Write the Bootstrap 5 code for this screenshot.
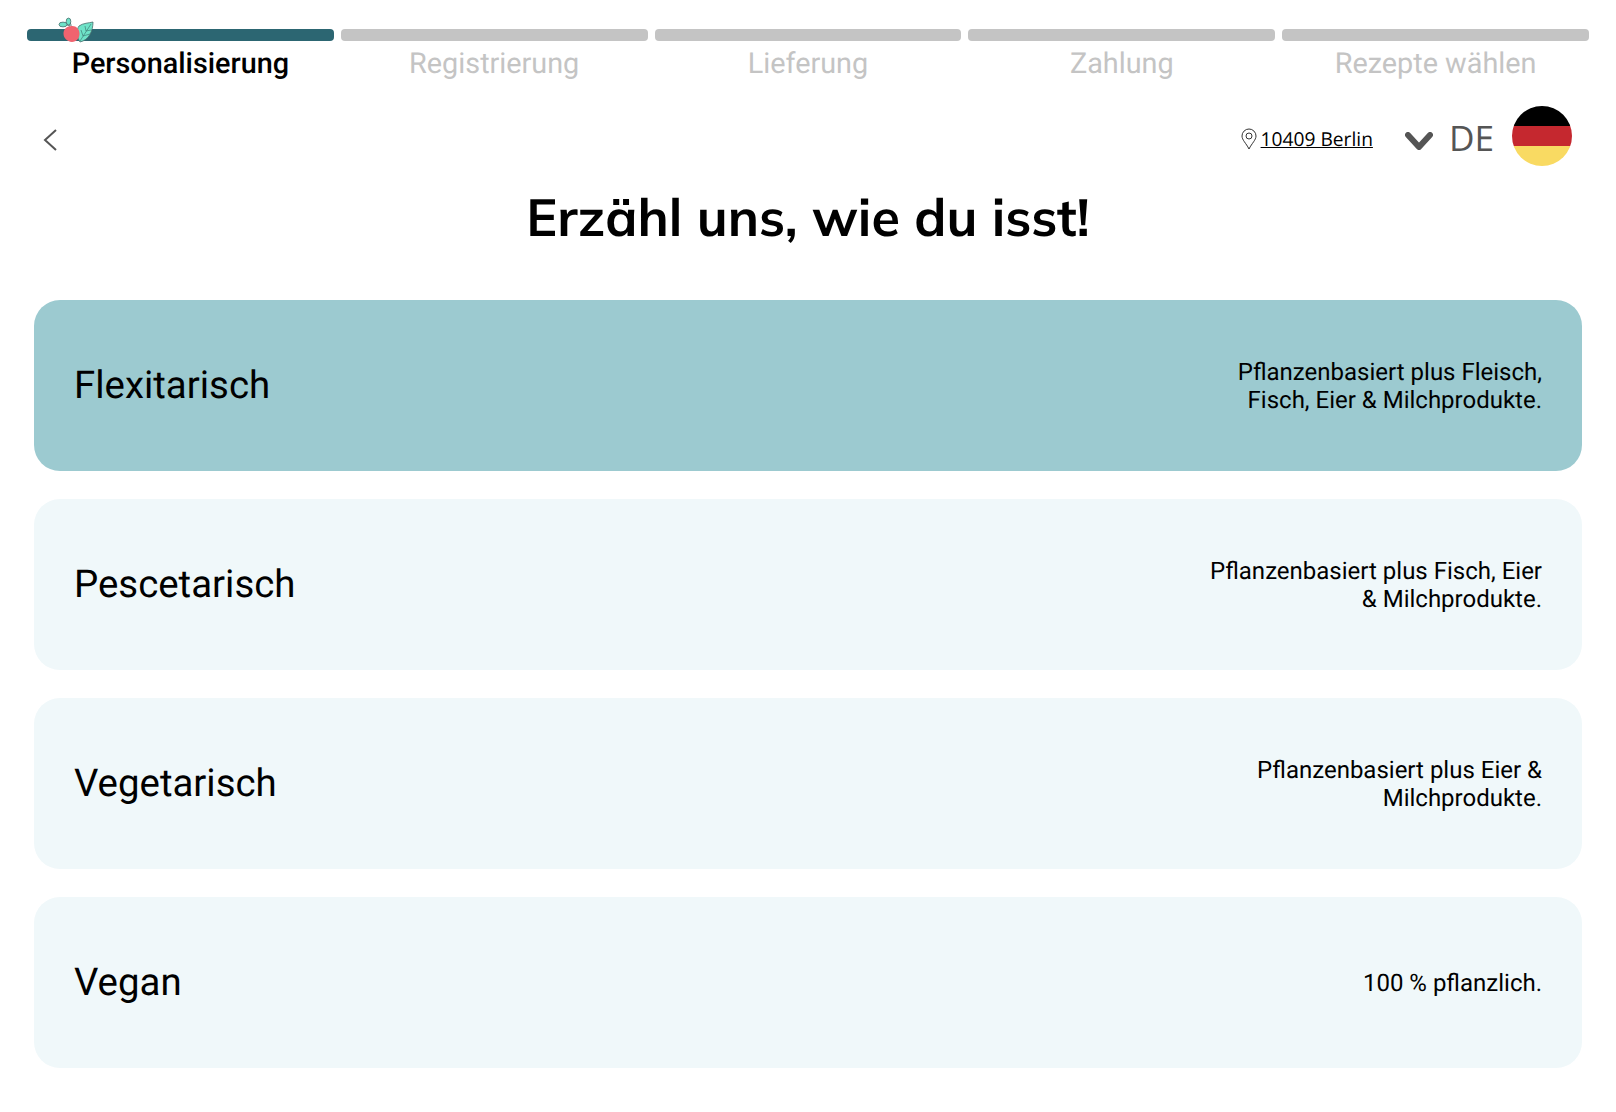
<!DOCTYPE html>
<html lang="de">
<head>
  <meta charset="UTF-8">
  <meta name="viewport" content="width=device-width, initial-scale=1">
  <title>Personalisierung</title>
  <link href="https://cdn.jsdelivr.net/npm/bootstrap@5.3.0/dist/css/bootstrap.min.css" rel="stylesheet">
  <style>
    body { font-family: Roboto, sans-serif; color: #000; background: #fff; text-rendering: geometricPrecision; }
    .steps { padding: 29px 27px 0; gap: 7px; }
    .step { flex: 1 1 0; text-align: center; font-size: 28.8px; line-height: 33px; color: #c4c4c4; }
    .step-bar { height: 12px; border-radius: 4px; background: #c4c4c4; margin-bottom: 7px; }
    .step-on { color: #000; font-weight: 500; }
    .step-on .step-bar { background: #2c6672; }
    .step-logo { position: absolute; left: 31px; top: -12px; }
    .topline { padding: 25px 44px 0 42px; height: 104px; }
    .back-arrow { margin-top: 22px; }
    .where { font-family: "Open Sans", sans-serif; font-size: 19.2px; color: #000; margin-right: 32px; margin-top: 7px; }
    .where a { color: #000; }
    .drop-arrow { margin-top: 10px; }
    .lang { font-family: "Open Sans", sans-serif; font-size: 35.2px; color: #555; line-height: 1; margin: 5px 18px 0 16px; }
    h1.title { font-family: Mulish, Lato, sans-serif; font-size: 52px; font-weight: 700; text-align: center; margin: 0; line-height: 64px; }
    .diets { padding: 51px 34px 0; gap: 28px; }
    .diet { height: 171px; border-radius: 26px; background: #f0f8fa; padding: 0 40px; }
    .diet-on { background: #9ccad0; }
    .diet-name { font-size: 38.4px; line-height: 44px; }
    .diet-text { font-size: 24px; line-height: 28px; text-align: right; }
  </style>
</head>
<body>
<div class="steps d-flex">
  <div class="step step-on position-relative">
    <div class="step-bar"></div>
    <svg class="step-logo" width="36" height="26" viewBox="0 0 36 26">
      <path d="M21 9 C25 6 31 6 35 5 C35 14 31 23 22 25 C19 21 18 13 21 9 Z" fill="#6fe3c8" stroke="#4a6d6d" stroke-width=".8"/>
      <path d="M22 24 L33 7 M25 19 L32 17 M25 19 L23 13 M28 14 L33 13 M28 14 L27 9" stroke="#3f7f78" stroke-width=".7" fill="none"/>
      <path d="M13.500 9 C18 8.500 21.500 12 21.500 16.500 C21.500 21 18.500 25 14 25 C9 24.500 5.500 21 5.500 16.500 C5.500 12 9 9 13.500 9 Z" fill="#f0636f"/>
      <path d="M13 9 C13 7 12 5 11 4 M12 9 C10 8 8 8 7 7" stroke="#4a6d6d" stroke-width="1" fill="none"/>
      <ellipse cx="10.500" cy="4.500" rx="2.300" ry="3.400" fill="#6fe3c8" stroke="#4a6d6d" stroke-width=".8"/>
      <ellipse cx="5" cy="7.500" rx="4" ry="2.400" fill="#6fe3c8" stroke="#4a6d6d" stroke-width=".8"/>
    </svg>
    Personalisierung
  </div>
  <div class="step"><div class="step-bar"></div>Registrierung</div>
  <div class="step"><div class="step-bar"></div>Lieferung</div>
  <div class="step"><div class="step-bar"></div>Zahlung</div>
  <div class="step"><div class="step-bar"></div>Rezepte wählen</div>
</div>

<div class="topline d-flex align-items-start">
  <svg class="back-arrow" width="16" height="24" viewBox="0 0 16 24"><path d="M14 2 L3 12 L14 22" fill="none" stroke="#555" stroke-width="2"/></svg>
  <div class="ms-auto d-flex align-items-center">
    <div class="where d-flex align-items-center gap-1">
      <svg width="16" height="22" viewBox="0 0 16 22"><path d="M8 21 C5 15 1 12 1 8 A7 7 0 0 1 15 8 C15 12 11 15 8 21 Z" fill="none" stroke="#333"/><circle cx="8" cy="8" r="3" fill="none" stroke="#333"/></svg>
      <a href="#">10409 Berlin</a>
    </div>
    <svg class="drop-arrow" width="28" height="18" viewBox="0 0 28 18"><path d="M3 3 L14 15 L25 3" fill="none" stroke="#555" stroke-width="6" stroke-linecap="round" stroke-linejoin="round"/></svg>
    <span class="lang">DE</span>
    <svg width="60" height="60" viewBox="0 0 60 60">
      <defs><clipPath id="flagclip"><circle cx="30" cy="30" r="30"/></clipPath></defs>
      <g clip-path="url(#flagclip)"><rect width="60" height="20" fill="#000"/><rect y="20" width="60" height="20" fill="#c5282f"/><rect y="40" width="60" height="20" fill="#f9da62"/></g>
    </svg>
  </div>
</div>

<h1 class="title">Erzähl uns, wie du isst!</h1>

<div class="diets d-flex flex-column">
  <div class="diet diet-on d-flex align-items-center justify-content-between">
    <div class="diet-name">Flexitarisch</div>
    <div class="diet-text">Pflanzenbasiert plus Fleisch,<br>Fisch, Eier &amp; Milchprodukte.</div>
  </div>
  <div class="diet d-flex align-items-center justify-content-between">
    <div class="diet-name">Pescetarisch</div>
    <div class="diet-text">Pflanzenbasiert plus Fisch, Eier<br>&amp; Milchprodukte.</div>
  </div>
  <div class="diet d-flex align-items-center justify-content-between">
    <div class="diet-name">Vegetarisch</div>
    <div class="diet-text">Pflanzenbasiert plus Eier &amp;<br>Milchprodukte.</div>
  </div>
  <div class="diet d-flex align-items-center justify-content-between">
    <div class="diet-name">Vegan</div>
    <div class="diet-text">100 % pflanzlich.</div>
  </div>
</div>

<script src="https://cdn.jsdelivr.net/npm/bootstrap@5.3.0/dist/js/bootstrap.bundle.min.js"></script>
</body>
</html>
